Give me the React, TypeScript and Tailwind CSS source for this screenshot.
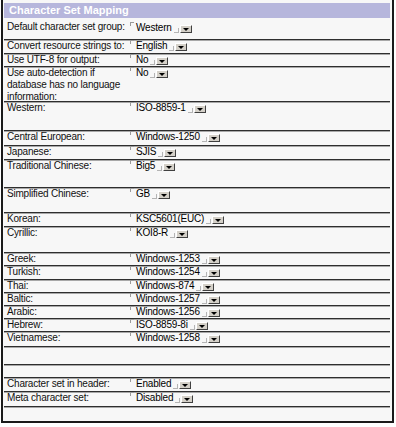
const rows: { label: string; value?: string; h: string }[] = [
  { label: "Default character set group:", value: "Western", h: "h-[21px]" },
  { label: "Convert resource strings to:", value: "English", h: "h-[14px]" },
  { label: "Use UTF-8 for output:", value: "No", h: "h-[13px]" },
  { label: "Use auto-detection if database has no language information:", value: "No", h: "h-[35px]" },
  { label: "Western:", value: "ISO-8859-1", h: "h-[29px]" },
  { label: "Central European:", value: "Windows-1250", h: "h-[15px]" },
  { label: "Japanese:", value: "SJIS", h: "h-[14px]" },
  { label: "Traditional Chinese:", value: "Big5", h: "h-[28px]" },
  { label: "Simplified Chinese:", value: "GB", h: "h-[25px]" },
  { label: "Korean:", value: "KSC5601(EUC)", h: "h-[14px]" },
  { label: "Cyrillic:", value: "KOI8-R", h: "h-[26px]" },
  { label: "Greek:", value: "Windows-1253", h: "h-[13px]" },
  { label: "Turkish:", value: "Windows-1254", h: "h-[14px]" },
  { label: "Thai:", value: "Windows-874", h: "h-[13px]" },
  { label: "Baltic:", value: "Windows-1257", h: "h-[13px]" },
  { label: "Arabic:", value: "Windows-1256", h: "h-[13px]" },
  { label: "Hebrew:", value: "ISO-8859-8i", h: "h-[13px]" },
  { label: "Vietnamese:", value: "Windows-1258", h: "h-[15px]" },
  { label: "", h: "h-[18px]" },
  { label: "", h: "h-[13px]" },
  { label: "Character set in header:", value: "Enabled", h: "h-[14px]" },
  { label: "Meta character set:", value: "Disabled", h: "h-[15px]" },
];

function Picker({ value, first }: { value: string; first?: boolean }) {
  return (
    <div className={`ml-[2px] flex items-start ${first ? "pt-[3px]" : ""}`}>
      <span className="block h-[4px] w-[4px] shrink-0 border-l border-t border-[#9a9a9a]" />
      <span className="ml-[2px] whitespace-nowrap leading-[12px]">{value}</span>
      <span className="ml-[2px] mt-[6px] block h-[5px] w-[5px] shrink-0 border-b border-r border-[#b4b4b4]" />
      <span className="ml-[1px] mt-[3px] flex h-[8px] w-[12px] shrink-0 items-center justify-center border border-b-[#404040] border-l-white border-r-[#404040] border-t-white bg-[#d4d0c8]">
        <span className="block h-0 w-0 border-l-[3px] border-r-[3px] border-t-[3px] border-l-transparent border-r-transparent border-t-black" />
      </span>
    </div>
  );
}

export default function App() {
  return (
    <div className="h-[427px] w-[396px] bg-white font-['Liberation_Sans',Arial,sans-serif] text-[10px] tracking-[-0.2px] text-black">
      <div className="ml-[1px] h-[423px] w-[393px] border-b-2 border-l-2 border-r-2 border-[#1a1a1a] bg-[#f7f7f7] pl-[1px] pr-[2px] pt-[3px]">
        {/* Header */}
        <div className="h-[15px] bg-[#b6b6dc] pl-[5px] text-[11px] font-bold leading-[15px] tracking-[0px] text-white">
          Character Set Mapping
        </div>
        <div className="h-[1px]" />

        {/* Rows */}
        {rows.map((row, i) => (
          <div
            key={i}
            className={`${row.h} flex overflow-hidden border-b border-[#2e2e2e] shadow-[0_1px_0_#a8a8a8]`}
          >
            <div
              className={`w-[124px] shrink-0 pl-[3px] leading-[12px] text-[#111] ${i === 0 ? "pt-[2px]" : ""}`}
            >
              {row.label}
            </div>
            {row.value && <Picker value={row.value} first={i === 0} />}
          </div>
        ))}
      </div>
    </div>
  );
}
